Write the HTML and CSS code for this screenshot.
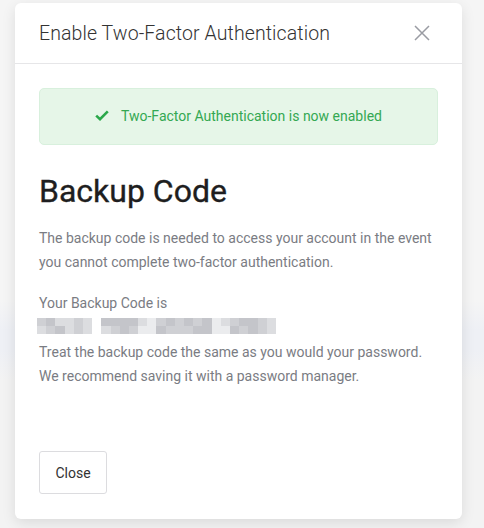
FILE: index.html
```html
<!DOCTYPE html>
<html>
<head>
<meta charset="utf-8">
<link rel="stylesheet" href="styles.css">
</head>
<body>
<div class="page">
  <div class="modal">
    <div class="modal-header">
      <h2 class="modal-title">Enable Two-Factor Authentication</h2>
      <svg class="close-x" width="16" height="16" viewBox="0 0 16 16"><path d="M1 1L15 15M15 1L1 15" stroke="#9a9ca3" stroke-width="1.5" fill="none"/></svg>
    </div>
    <div class="modal-body">
      <div class="alert">
        <svg class="check" width="14" height="11" viewBox="0 0 14 11"><path d="M1.2 5.6L5 9.2L12.8 1.4" stroke="#2aa84a" stroke-width="2.6" fill="none"/></svg>
        <span>Two-Factor Authentication is now enabled</span>
      </div>
      <h1 class="heading">Backup Code</h1>
      <p class="text">The backup code is needed to access your account in the event you cannot complete two-factor authentication.</p>
      <p class="label">Your Backup Code is</p>
      <div class="code">
        <div class="row">
          <span class="m"></span><span class="d"></span><span class="l"></span><span class="l"></span><span class="m"></span><span class="l"></span>
          <span class="x"></span>
          <span class="d"></span><span class="d"></span><span class="d"></span><span class="d"></span><span class="l"></span><span class="w"></span>
          <span class="m"></span><span class="d"></span><span class="m"></span><span class="d"></span><span class="m"></span><span class="d"></span><span class="w"></span>
          <span class="l"></span><span class="m"></span><span class="d"></span><span class="d"></span><span class="m"></span><span class="l"></span>
        </div>
        <div class="row">
          <span class="l"></span><span class="m"></span><span class="d"></span><span class="l"></span><span class="m"></span><span class="l"></span>
          <span class="x"></span>
          <span class="l"></span><span class="m"></span><span class="d"></span><span class="m"></span><span class="w"></span><span class="w"></span>
          <span class="d"></span><span class="m"></span><span class="m"></span><span class="m"></span><span class="d"></span><span class="d"></span><span class="w"></span>
          <span class="w"></span><span class="d"></span><span class="m"></span><span class="d"></span><span class="m"></span><span class="l"></span>
        </div>
      </div>
      <p class="text">Treat the backup code the same as you would your password. We recommend saving it with a password manager.</p>
    </div>
    <div class="modal-footer">
      <button class="btn">Close</button>
    </div>
  </div>
</div>
</body>
</html>
```
FILE: styles.css
```css
* { box-sizing: border-box; }
html, body { margin: 0; padding: 0; }
body {
  background: #f2f2f3;
  font-family: Roboto, "Liberation Sans", Arial, sans-serif;
  width: 484px;
  height: 528px;
  overflow: hidden;
}
.page {
  padding: 3px 0 0 15px;
  background: linear-gradient(to bottom, #f5f5f5 0, #f5f5f5 300px, #eef0f5 330px, #eef0f5 350px, #f3f3f3 380px);
  height: 528px;
}
.modal {
  width: 447px;
  height: 516px;
  background: #fff;
  border-radius: 6px;
  box-shadow: 0 4px 14px rgba(0,0,0,0.10);
  display: flex;
  flex-direction: column;
}
.modal-header {
  height: 61px;
  border-bottom: 1px solid #e6e6e8;
  display: flex;
  align-items: center;
  justify-content: space-between;
  padding: 0 32px 0 24px;
}
.modal-title {
  margin: 0;
  font-weight: 300;
  font-size: 19.5px;
  color: #333;
  letter-spacing: 0.1px;
}
.close-x { display: block; }
.modal-body {
  padding: 24px 24px 0 24px;
  flex: 1;
}
.alert {
  height: 57px;
  background: #e6f6e8;
  border: 1px solid #d8f0dd;
  border-radius: 5px;
  display: flex;
  align-items: center;
  justify-content: center;
  gap: 12px;
  color: #34a852;
  font-size: 14px;
  padding-bottom: 2px;
}
.check { display: block; }
.heading {
  margin: 27px 0 0 0;
  font-size: 32px;
  font-weight: 400;
  color: #1e1e20;
  line-height: 38px;
  -webkit-text-stroke: 0.35px #1e1e20;
}
.text {
  margin: 16px 0 0 0;
  font-size: 14px;
  line-height: 24px;
  color: #7a7c83;
}
.label {
  margin: 17px 0 0 0;
  font-size: 14px;
  line-height: 24px;
  color: #7a7c83;
}
.code {
  margin: 3px 0 0 -2px;
  display: flex;
  flex-direction: column;
}
.code + .text { margin-top: 6px; }
.row { display: flex; }
.row span { width: 9.2px; height: 8px; display: block; }
.row .x { background: #fff; }
.d { background: #c4c5ca; }
.m { background: #cfd0d4; }
.l { background: #dcdde0; }
.w { background: #ebecee; }
.modal-footer {
  padding: 0 24px 25px 24px;
}
.btn {
  width: 68px;
  height: 43px;
  background: #fff;
  border: 1px solid #dcdcdf;
  border-radius: 3px;
  font-family: Roboto, "Liberation Sans", Arial, sans-serif;
  font-size: 14px;
  color: #333;
  padding: 0;
}
```
